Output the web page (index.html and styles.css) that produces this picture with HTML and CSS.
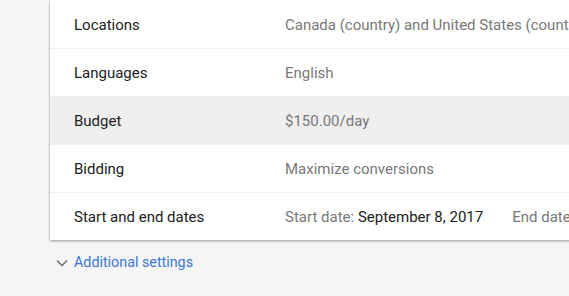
FILE: index.html
```html
<!DOCTYPE html>
<html>
<head>
<meta charset="utf-8">
<link rel="stylesheet" href="styles.css">
</head>
<body>
<div class="page">
  <div class="card">
    <div class="row">
      <div class="label">Locations</div>
      <div class="value">Canada (country) and United States (country)</div>
    </div>
    <div class="row">
      <div class="label">Languages</div>
      <div class="value">English</div>
    </div>
    <div class="row hover">
      <div class="label">Budget</div>
      <div class="value">$150.00/day</div>
    </div>
    <div class="row">
      <div class="label">Bidding</div>
      <div class="value">Maximize conversions</div>
    </div>
    <div class="row last">
      <div class="label">Start and end dates</div>
      <div class="value"><span class="date">Start date: <b>September 8, 2017</b></span><span class="date">End date</span></div>
    </div>
  </div>
  <div class="more">
    <svg class="chev" width="12" height="8" viewBox="0 0 12 8"><path d="M1 1.5 L6 6.5 L11 1.5" fill="none" stroke="#757575" stroke-width="1.6"/></svg>
    <span class="link">Additional settings</span>
  </div>
</div>
</body>
</html>
```

FILE: styles.css
```css
html, body {
  margin: 0;
  padding: 0;
  background: #f5f5f5;
  overflow: hidden;
  width: 569px;
  height: 296px;
}
.page {
  font-family: Roboto, "Liberation Sans", sans-serif;
  font-size: 15px;
  padding-left: 50px;
}
.card {
  width: 620px;
  background: #fff;
  padding-top: 1px;
  box-shadow: 0 1px 3px rgba(0,0,0,0.28), 0 1px 2px rgba(0,0,0,0.12);
}
.row {
  display: flex;
  align-items: center;
  height: 48px;
  border-bottom: 1px solid #efefef;
  box-sizing: border-box;
  padding-left: 24px;
  white-space: nowrap;
}
.row.last { border-bottom: none; height: 47px; }
.row.hover { background: #efefef; }
.label {
  width: 211px;
  color: #212121;
}
.value {
  color: #787878;
}
.date { margin-right: 29px; }
.date b { font-weight: 400; color: #212121; }
.more {
  display: flex;
  align-items: center;
  height: 40px;
  padding-top: 2px;
  padding-left: 6px;
}
.chev { margin-right: 6px; margin-top: 1px; }
.link { color: #3b78d8; font-size: 14.3px; }
```
